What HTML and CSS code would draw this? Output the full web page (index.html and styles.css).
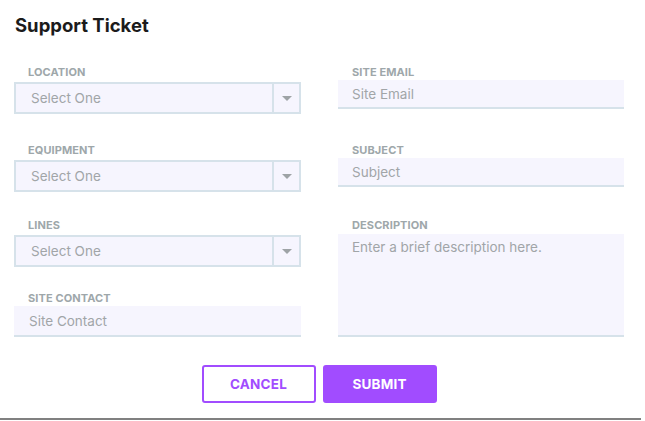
FILE: index.html
```html
<!DOCTYPE html>
<html lang="en">
<head>
<meta charset="utf-8">
<title>Support Ticket</title>
<link rel="stylesheet" href="styles.css">
</head>
<body>
<div class="dialog">
  <h1 class="title">Support Ticket</h1>
  <form class="form">
    <div class="grid">
      <div class="field">
        <label class="label label-select">LOCATION</label>
        <div class="select"><span class="select-value">Select One</span><span class="select-arrow"><svg width="10" height="5" viewBox="0 0 10 5"><path d="M0 0H10L5 5Z" fill="#9ea3a6"/></svg></span></div>
      </div>
      <div class="field">
        <label class="label">SITE EMAIL</label>
        <input class="input" type="text" placeholder="Site Email">
      </div>
      <div class="field">
        <label class="label label-select">EQUIPMENT</label>
        <div class="select"><span class="select-value">Select One</span><span class="select-arrow"><svg width="10" height="5" viewBox="0 0 10 5"><path d="M0 0H10L5 5Z" fill="#9ea3a6"/></svg></span></div>
      </div>
      <div class="field">
        <label class="label">SUBJECT</label>
        <input class="input" type="text" placeholder="Subject">
      </div>
      <div class="field">
        <label class="label label-select">LINES</label>
        <div class="select"><span class="select-value">Select One</span><span class="select-arrow"><svg width="10" height="5" viewBox="0 0 10 5"><path d="M0 0H10L5 5Z" fill="#9ea3a6"/></svg></span></div>
      </div>
      <div class="field field-desc">
        <label class="label label-select">DESCRIPTION</label>
        <textarea class="textarea" placeholder="Enter a brief description here."></textarea>
      </div>
      <div class="field field-contact">
        <label class="label">SITE CONTACT</label>
        <input class="input input-contact" type="text" placeholder="Site Contact">
      </div>
    </div>
    <div class="actions">
      <button type="button" class="btn btn-outline">CANCEL</button>
      <button type="button" class="btn btn-solid">SUBMIT</button>
    </div>
  </form>
</div>
</body>
</html>
```
FILE: styles.css
```css
* { box-sizing: border-box; }
html, body { margin: 0; padding: 0; background: #fff; }
body { font-family: Inter, "Noto Sans", "Liberation Sans", sans-serif; }

.dialog {
  width: 641px;
  padding: 13px 17px 15px 14px;
  border-bottom: 2px solid #808080;
}

.title {
  margin: 0 0 28px 1px;
  font-size: 18.5px;
  line-height: 24px;
  font-weight: 700;
  color: #1b1b1b;
}

.grid {
  display: grid;
  grid-template-columns: 287px 286px;
  column-gap: 37px;
  grid-template-rows: 78px 75px 73px auto;
}

.field {
  display: flex;
  flex-direction: column;
}

.field-desc { grid-column: 2; grid-row: 3 / span 2; }
.field-contact { grid-column: 1; grid-row: 4; }

.label {
  font-size: 11px;
  line-height: 14px;
  font-weight: 700;
  color: #9ea7aa;
  padding-left: 14px;
  margin-bottom: 1px;
  letter-spacing: 0.1px;
}
.label-select { margin-bottom: 2px; }

.select {
  display: flex;
  height: 32px;
  margin-top: 1px;
  border: 2px solid #d6e2ea;
  background: #f6f5fe;
}
.select-value {
  flex: 1;
  padding-left: 15px;
  font-size: 13.5px;
  line-height: 28px;
  color: #a1a5a8;
}
.select-arrow {
  width: 27px;
  border-left: 2px solid #d6e2ea;
  display: flex;
  align-items: center;
  justify-content: center;
}

.input, .textarea {
  font-family: inherit;
  font-size: 13.5px;
  color: #555;
  border: none;
  border-bottom: 2px solid #d6e2ea;
  background: #f6f5fe;
  outline: none;
  width: 100%;
  margin: 0;
}
.input {
  height: 29px;
  padding: 1px 14px 0 14px;
}
.input-contact { height: 31px; padding-left: 15px; }
.textarea {
  flex: 1;
  resize: none;
  padding: 4px 14px;
  line-height: 18px;
}
.input::placeholder, .textarea::placeholder { color: #a1a5a8; opacity: 1; }

.actions {
  display: flex;
  justify-content: center;
  gap: 7px;
  margin-top: 28px;
}

.btn {
  width: 114px;
  height: 38px;
  border-radius: 3px;
  font-family: inherit;
  font-size: 13.5px;
  font-weight: 700;
  letter-spacing: 0.2px;
  cursor: pointer;
}
.btn-outline {
  background: #fff;
  border: 2px solid #a14cff;
  color: #a14cff;
}
.btn-solid {
  background: #a14cff;
  border: 2px solid #a14cff;
  color: #fff;
}
```
